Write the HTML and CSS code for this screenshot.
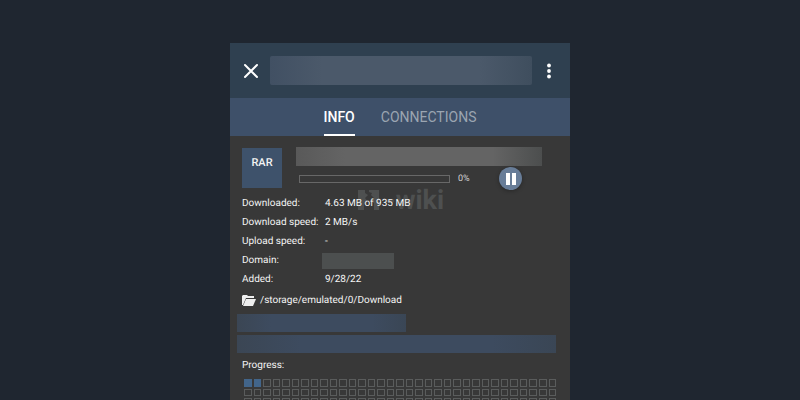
FILE: index.html
```html
<!DOCTYPE html>
<html lang="en">
<head>
    <meta charset="UTF-8">
    <meta name="viewport" content="width=device-width, initial-scale=1.0">
    <title>Download info</title>
    <link rel="stylesheet" href="styles.css">
</head>
<body>
    <main class="app">
        <header class="topbar">
            <button class="icon-btn" aria-label="Close">
                <svg width="16" height="16" viewBox="0 0 16 16"><path d="M2 2l12 12M14 2L2 14" stroke="#fff" stroke-width="2" stroke-linecap="round"/></svg>
            </button>
            <div class="hidden-title"></div>
            <button class="icon-btn more" aria-label="More options">
                <svg width="6" height="16" viewBox="0 0 6 16" fill="#fff"><circle cx="3" cy="2.5" r="1.9"/><circle cx="3" cy="8" r="1.9"/><circle cx="3" cy="13.5" r="1.9"/></svg>
            </button>
        </header>

        <nav class="tabs">
            <button class="tab active">INFO</button>
            <button class="tab">CONNECTIONS</button>
        </nav>

        <section class="content">
            <div class="file">
                <div class="file-type">RAR</div>
                <div class="file-main">
                    <div class="hidden-name"></div>
                    <div class="transfer">
                        <progress class="bar" id="bar" value="0" max="100"></progress>
                        <label class="percent" for="bar">0%</label>
                        <button class="pause" aria-label="Pause">
                            <svg width="10" height="12" viewBox="0 0 10 12" fill="#fff"><path d="M0 0h4v12H0zM6 0h4v12H6z"/></svg>
                        </button>
                    </div>
                </div>
            </div>

            <div class="details">
                <div class="watermark" aria-hidden="true">
                    <svg width="22" height="22" viewBox="0 0 22 22" fill="currentColor"><path d="M0 1h7v3l3 2-3 3 3 4-3 1v1H6v6H0zM11 1h10v20h-5v-7l-2-1 2-4-3-3 1-2-3-1z"/></svg>
                    <span>-wiki</span>
                </div>
                <table class="stats">
                    <tr><th>Downloaded:</th><td>4.63 MB of 935 MB</td></tr>
                    <tr><th>Download speed:</th><td>2 MB/s</td></tr>
                    <tr><th>Upload speed:</th><td>-</td></tr>
                    <tr><th>Domain:</th><td><div class="hidden-domain"></div></td></tr>
                    <tr><th>Added:</th><td>9/28/22</td></tr>
                </table>
            </div>

            <div class="path">
                <svg width="14" height="11" viewBox="0 0 14 11"><path d="M1 0h4l1 1h6v2H4L1 10H0V1z" fill="#eee"/><path d="M4 4h10l-3 7H1z" fill="#eee"/></svg>
                <span>/storage/emulated/0/Download</span>
            </div>

            <div class="hidden-link short"></div>
            <div class="hidden-link"></div>

            <h2 class="progress-title">Progress:</h2>
            <div class="pieces" id="pieces"></div>
        </section>
    </main>

    <script>
        const pieces = document.getElementById('pieces');
        const total = 33 * 6;
        const done = 2;

        for (let i = 0; i < total; i++) {
            const piece = document.createElement('span');
            piece.className = i < done ? 'piece done' : 'piece';
            pieces.appendChild(piece);
        }
    </script>
</body>
</html>
```

FILE: styles.css
```css
* {
    box-sizing: border-box;
}

body {
    font-family: Roboto, sans-serif;
    font-size: 10px;
    text-rendering: geometricPrecision;
    color: #f4f4f4;
    background-color: #1f2630;
    margin: 0;
    padding-top: 43px;
    height: 100vh;
    overflow: hidden;
}

button {
    font-family: inherit;
    color: inherit;
    background: none;
    border: none;
    padding: 0;
    cursor: pointer;
}

svg {
    display: block;
}

.app {
    max-width: 340px;
    margin: 0 auto;
    background-color: #383838;
}

.topbar {
    display: flex;
    align-items: center;
    height: 55px;
    padding: 0 18px 0 13px;
    background-color: #2f4050;
}

.icon-btn {
    flex: none;
}

.hidden-title {
    flex: 1;
    height: 29px;
    margin: 0 14px 0 11px;
    border-radius: 2px;
    background: linear-gradient(90deg, #415063, #4b596a 20%, #4b596a 80%, #3f4e5e);
}

.tabs {
    display: flex;
    justify-content: center;
    gap: 26px;
    height: 38px;
    background-color: #3e5069;
}

.tab {
    font-size: 14px;
    color: #9ba5b1;
    border-top: 2px solid transparent;
    border-bottom: 2px solid transparent;
}

.tab.active {
    font-weight: 500;
    color: #fff;
    border-bottom-color: #fff;
}

.content {
    padding: 11px 14px 0 12px;
}

.file {
    display: flex;
    gap: 14px;
}

.file-type {
    width: 40px;
    height: 40px;
    margin-top: 1px;
    padding-top: 8px;
    font-size: 11px;
    font-weight: 500;
    line-height: 13px;
    text-align: center;
    background-color: #3e526b;
}

.file-main {
    flex: 1;
}

.hidden-name {
    height: 19px;
    margin-right: 14px;
    background: linear-gradient(90deg, #595959, #646464 20%, #646464 80%, #4c4e4e);
}

.transfer {
    display: flex;
    align-items: center;
    height: 23px;
    margin: 1px 34px 0 3px;
}

.bar {
    appearance: none;
    flex: 1;
    min-width: 0;
    height: 8px;
    border: 1px solid #686868;
}

.bar::-webkit-progress-bar {
    background-color: transparent;
}

.bar::-webkit-progress-value {
    background-color: #3e6080;
}

.percent {
    width: 49px;
    padding-left: 8px;
    font-size: 9px;
    color: #d4d4d4;
}

.pause {
    display: flex;
    align-items: center;
    justify-content: center;
    width: 23px;
    height: 23px;
    border-radius: 50%;
    background-color: #687d98;
    box-shadow: 0 1px 4px rgba(0, 0, 0, 0.3);
}

.details {
    position: relative;
    margin-top: 4px;
}

.watermark {
    position: absolute;
    top: -10px;
    left: 116px;
    display: flex;
    align-items: center;
    gap: 5px;
    font-size: 27px;
    font-weight: 700;
    color: #4e5050;
}

.stats {
    position: relative;
    border-collapse: collapse;
}

.stats th,
.stats td {
    height: 19px;
    padding: 0;
    font-weight: 400;
    line-height: 19px;
    text-align: left;
    white-space: nowrap;
}

.stats th {
    width: 83px;
    min-width: 83px;
}

.hidden-domain {
    width: 72px;
    height: 16px;
    margin-left: -3px;
    background-color: #4c4f4f;
}

.path {
    display: flex;
    align-items: center;
    gap: 4px;
    height: 19px;
    margin: 2px 0 4px;
}

.hidden-link {
    height: 18px;
    margin: 0 0 3px -5px;
    background: linear-gradient(90deg, #3b4654, #3d4b5f 20%, #3d4b5f 80%, #3a4655);
}

.hidden-link.short {
    width: 169px;
}

.progress-title {
    margin: 3px 0 0;
    font-size: 10px;
    font-weight: 400;
    line-height: 19px;
}

.pieces {
    display: grid;
    grid-template-columns: repeat(33, 1fr);
    gap: 2px;
    padding: 4px 0 12px 2px;
}

.piece {
    aspect-ratio: 1;
    border: 1px solid #5a5c5c;
}

.piece.done {
    border-color: #42658a;
    background-color: #42658a;
}
```
